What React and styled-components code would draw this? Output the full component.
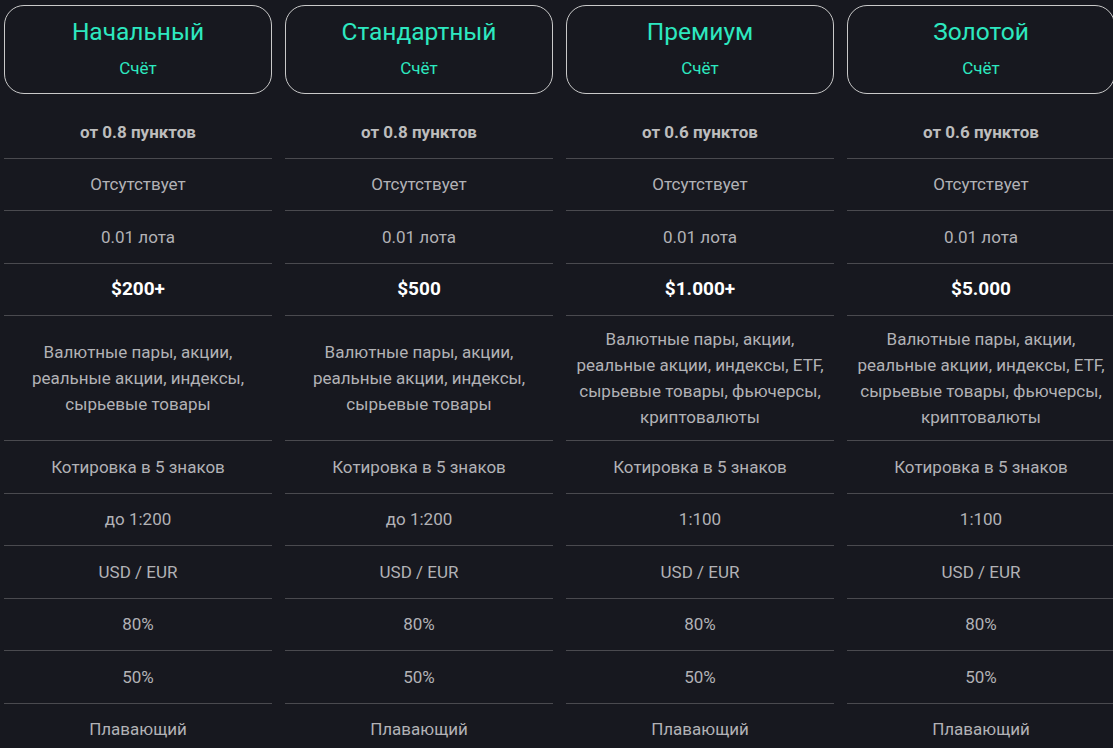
import React from "react";
import styled, { createGlobalStyle } from "styled-components";

const GlobalStyle = createGlobalStyle`
  html, body {
    margin: 0;
    padding: 0;
    background: #17181f;
    overflow: hidden;
  }
  body {
    font-family: Roboto, "Liberation Sans", Arial, sans-serif;
  }
`;

const Page = styled.div`
  width: 1115px;
  padding: 5px 0 0 4px;
  display: grid;
  grid-template-columns: repeat(4, 268px);
  column-gap: 13px;
  background: #17181f;
`;

const Column = styled.div`
  display: flex;
  flex-direction: column;
`;

const Head = styled.div`
  height: 89px;
  box-sizing: border-box;
  border: 1px solid #c9c9c9;
  border-radius: 20px;
  display: flex;
  flex-direction: column;
  align-items: center;
  color: #2de8c0;
  margin-bottom: 12px;
`;

const Title = styled.div`
  font-size: 24.5px;
  line-height: 28px;
  margin-top: 12px;
`;

const Sub = styled.div`
  font-size: 17px;
  line-height: 20px;
  margin-top: 12px;
`;

const Cell = styled.div`
  box-sizing: border-box;
  min-height: ${(p) => (p.$tall ? "125px" : "52.5px")};
  padding: 10px 2px;
  border-bottom: 1px solid #4a4a4f;
  display: flex;
  align-items: center;
  justify-content: center;
  text-align: center;
  line-height: 26px;
  color: ${(p) => (p.$strong ? "#ffffff" : p.$bold ? "#bdbdbd" : "#b2b2b6")};
  font-weight: ${(p) => (p.$bold || p.$strong ? 700 : 400)};
  font-size: ${(p) => (p.$strong ? "19px" : "17px")};
`;

const Lines = styled.div`
  display: flex;
  flex-direction: column;
`;

const plans = [
  {
    name: "Начальный",
    spread: "от 0.8 пунктов",
    price: "$200+",
    assets: ["Валютные пары, акции,", "реальные акции, индексы,", "сырьевые товары"],
    leverage: "до 1:200",
  },
  {
    name: "Стандартный",
    spread: "от 0.8 пунктов",
    price: "$500",
    assets: ["Валютные пары, акции,", "реальные акции, индексы,", "сырьевые товары"],
    leverage: "до 1:200",
  },
  {
    name: "Премиум",
    spread: "от 0.6 пунктов",
    price: "$1.000+",
    assets: [
      "Валютные пары, акции,",
      "реальные акции, индексы, ETF,",
      "сырьевые товары, фьючерсы,",
      "криптовалюты",
    ],
    leverage: "1:100",
  },
  {
    name: "Золотой",
    spread: "от 0.6 пунктов",
    price: "$5.000",
    assets: [
      "Валютные пары, акции,",
      "реальные акции, индексы, ETF,",
      "сырьевые товары, фьючерсы,",
      "криптовалюты",
    ],
    leverage: "1:100",
  },
];

const App = () => {
  return (
    <>
      <GlobalStyle />
      <Page>
        {plans.map((p) => (
          <Column key={p.name}>
            <Head>
              <Title>{p.name}</Title>
              <Sub>Счёт</Sub>
            </Head>
            <Cell $bold>{p.spread}</Cell>
            <Cell>Отсутствует</Cell>
            <Cell>0.01 лота</Cell>
            <Cell $strong>{p.price}</Cell>
            <Cell $tall>
              <Lines>
                {p.assets.map((line) => (
                  <span key={line}>{line}</span>
                ))}
              </Lines>
            </Cell>
            <Cell>Котировка в 5 знаков</Cell>
            <Cell>{p.leverage}</Cell>
            <Cell>USD / EUR</Cell>
            <Cell>80%</Cell>
            <Cell>50%</Cell>
            <Cell>Плавающий</Cell>
          </Column>
        ))}
      </Page>
    </>
  );
};

export default App;
